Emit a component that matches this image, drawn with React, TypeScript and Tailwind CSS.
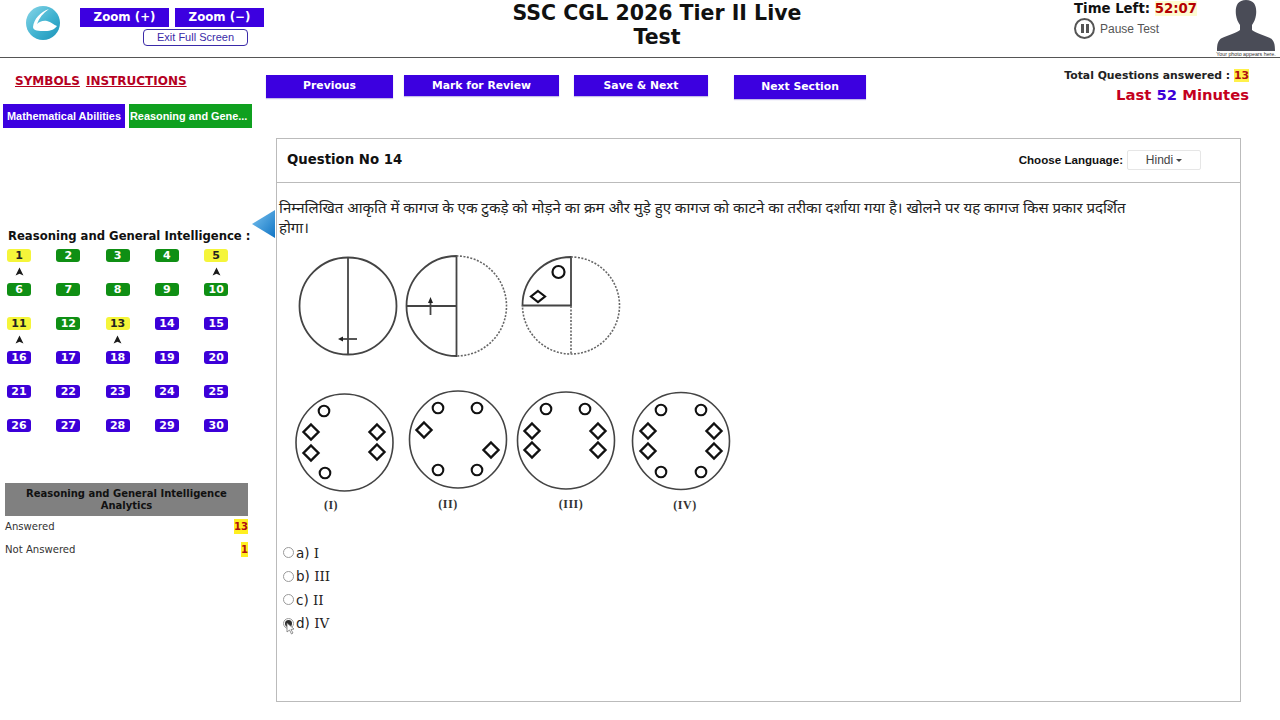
import React from "react";

const verdana = "font-['DejaVu_Sans',sans-serif]";

function Logo() {
  return (
    <svg width="36" height="36" viewBox="0 0 36 36">
      <defs>
        <linearGradient id="lg" x1="0" y1="0" x2="1" y2="1">
          <stop offset="0" stopColor="#8ad6e8" />
          <stop offset="0.55" stopColor="#3fb2d0" />
          <stop offset="1" stopColor="#1c93b8" />
        </linearGradient>
      </defs>
      <circle cx="18" cy="18" r="17" fill="url(#lg)" />
      <path d="M24 4 C15 7 9 14 8 22 C8 26 14 26 20 26 C26 26 30 24 32 21 C29 20 26 17 22 16 C18 15 14 17 12 19 C14 13 18 8 24 4 Z" fill="#ffffff" />
    </svg>
  );
}

function Person() {
  return (
    <svg width="60" height="51" viewBox="0 0 60 51">
      <path d="M30 0 C21 0 19 7 20 15 C20.5 19 22 22 24 25 L24 30 C21 33 12 35 6 38 C2 40 1 44 1 51 L59 51 C59 44 58 40 54 38 C48 35 39 33 36 30 L36 25 C38 22 39.5 19 40 15 C41 7 39 0 30 0 Z" fill="#4a4c57" />
    </svg>
  );
}

function Fold1() {
  return (
    <g fill="none" stroke="#444" strokeWidth="1.800">
      <circle cx="348" cy="306" r="48.500" />
      <path d="M348 258V354" />
      <path d="M357 339H341" />
      <path d="M338 339l5-2.500v5z" fill="#222" stroke="none" />
    </g>
  );
}

function Fold2() {
  return (
    <g fill="none" stroke="#444" strokeWidth="1.800">
      <path d="M456.500 256 A50 50 0 0 0 456.500 356 Z" />
      <path d="M456.500 256 A50 50 0 0 1 456.500 356" strokeDasharray="2 1.500" strokeWidth="1.600" stroke="#666" />
      <path d="M406 306H456" />
      <path d="M430.500 315V301" />
      <path d="M430.500 297l-2.500 6h5z" fill="#222" stroke="none" />
    </g>
  );
}

function Fold3() {
  return (
    <g fill="none" stroke="#444" strokeWidth="1.800">
      <path d="M571 257 A48.500 48.500 0 0 0 522.500 305.500 H571 Z" />
      <path d="M571 257 A48.500 48.500 0 0 1 571 354 A48.500 48.500 0 0 1 522.500 305.500" strokeDasharray="2 1.500" strokeWidth="1.600" stroke="#666" />
      <path d="M571 306V354" strokeDasharray="2 1.500" strokeWidth="1.600" stroke="#666" />
      <circle cx="558.500" cy="272" r="6" stroke="#111" strokeWidth="2.200" />
      <path d="M538 291l7 5.500-7 5.500-7-5.500z" stroke="#111" strokeWidth="2.200" />
    </g>
  );
}

function Dia({ x, y }: { x: number; y: number }) {
  return <path d={`M${x} ${y - 7.500}l7.500 7.500-7.500 7.500-7.500-7.500z`} fill="none" stroke="#111" strokeWidth="2.400" />;
}

function Opt({ cx, cy, r, circles, dias }: { cx: number; cy: number; r: number; circles: number[][]; dias: number[][] }) {
  return (
    <g>
      <circle cx={cx} cy={cy} r={r} fill="none" stroke="#444" strokeWidth="1.600" />
      {circles.map(([x, y]) => (
        <circle key={`${x}-${y}`} cx={x} cy={y} r="5.300" fill="none" stroke="#111" strokeWidth="2.100" />
      ))}
      {dias.map(([x, y]) => (
        <Dia key={`${x}-${y}`} x={x} y={y} />
      ))}
    </g>
  );
}

function Figure() {
  const s = { fontFamily: "'Liberation Serif',serif", fontWeight: 700, fontSize: 12, fill: "#333", letterSpacing: 0.5 };
  return (
    <svg width="480" height="270" viewBox="280 250 480 270" className="block">
      <Fold1 />
      <Fold2 />
      <Fold3 />
      <Opt cx={344.500} cy={442.500} r={48.500} circles={[[324, 411], [325, 473]]} dias={[[311, 432], [311, 453], [377, 432], [377, 452]]} />
      <Opt cx={458} cy={439.500} r={48.500} circles={[[438, 408], [477, 408], [438, 470], [477, 470]]} dias={[[424, 430], [491, 450]]} />
      <Opt cx={566} cy={440.500} r={48.500} circles={[[546, 409], [585, 409]]} dias={[[532, 431], [532, 450], [598, 431], [598, 450]]} />
      <Opt cx={681} cy={441} r={48.500} circles={[[661, 410], [701, 410], [661, 472], [701, 472]]} dias={[[648, 431], [648, 451], [714, 431], [714, 451]]} />
      <text x="331" y="509" textAnchor="middle" style={s}>(I)</text>
      <text x="448" y="508" textAnchor="middle" style={s}>(II)</text>
      <text x="571" y="508" textAnchor="middle" style={s}>(III)</text>
      <text x="685" y="509" textAnchor="middle" style={s}>(IV)</text>
    </svg>
  );
}

const yellow = [1, 5, 11, 13];
const green = [2, 3, 4, 6, 7, 8, 9, 10, 12];

function Num({ n }: { n: number }) {
  const tone = yellow.includes(n)
    ? "bg-[#f5f53a] text-[#222]"
    : green.includes(n)
      ? "bg-[#0f8f14] text-white"
      : "bg-[#3c00d8] text-white";
  return (
    <div className="h-[34px] flex flex-col items-start">
      <div className={`w-[24px] h-[13px] rounded-[3px] flex items-center justify-center text-[11px] font-bold leading-none ${verdana} ${tone}`}>{n}</div>
      {yellow.includes(n) && (
        <svg width="9" height="9" viewBox="0 0 8 8" className="mt-[5px] ml-[7.500px]">
          <path d="M4 0.500 L7.500 7.500 L4 6 L0.500 7.500 Z" fill="#1a1a1a" />
        </svg>
      )}
    </div>
  );
}

function ActionButton({ children, className }: { children: React.ReactNode; className: string }) {
  return (
    <button className={`bg-[#3c00e0] text-white text-[10.800px] font-bold ${verdana} shadow-[0_1px_1px_#c4bce8] ${className}`}>
      {children}
    </button>
  );
}

function Choice({ label, num, checked }: { label: string; num: string; checked?: boolean }) {
  return (
    <label className="h-[23.500px] flex items-center text-[13.500px] text-[#222] font-['DejaVu_Sans',sans-serif]">
      <span className="relative w-[11px] h-[11px] rounded-full border border-[#9a9a9a] bg-white flex items-center justify-center">
        {checked && <span className="w-[7px] h-[7px] rounded-full bg-[#2d2d2d]" />}
        {checked && (
          <svg width="10" height="13" viewBox="0 0 10 13" className="absolute left-[2px] top-[3px]">
            <path d="M1 1 L1 10 L3.500 8 L5.500 12 L7 11 L5 7.500 L8 7 Z" fill="#fff" stroke="#777" strokeWidth="0.8" />
          </svg>
        )}
      </span>
      <span className="ml-[2px]">{label} <span className="font-['DejaVu_Serif',serif]">{num}</span></span>
    </label>
  );
}

export default function App() {
  const hindi = "font-['Noto_Sans','Noto_Sans_Devanagari','DejaVu_Sans',sans-serif]";
  return (
    <div className="w-[1280px] h-[720px] overflow-hidden bg-white relative">
      <header className="h-[58px] border-b border-[#555] flex">
        <div className="w-[80px] pl-[25px] pt-[5px]">
          <Logo />
        </div>
        <div className="w-[199px] pt-[8px]">
          <div className="flex gap-[6px]">
            <button className={`w-[89px] h-[19px] bg-[#3c00e0] text-white text-[11.800px] font-bold ${verdana}`}>Zoom (+)</button>
            <button className={`w-[89px] h-[19px] bg-[#3c00e0] text-white text-[11.800px] font-bold ${verdana}`}>Zoom (−)</button>
          </div>
          <button className="block ml-[63px] mt-[2px] w-[105px] h-[17px] rounded-[4px] border border-[#3a2aa8] text-[#3a2aa8] text-[11px] leading-none font-['Liberation_Sans',sans-serif]">
            Exit Full Screen
          </button>
        </div>
        <h1 className={`w-[756px] pt-[1px] text-center text-[20.500px] leading-[24px] font-bold text-[#111] ${verdana} px-[225px]`}>
          SSC CGL 2026 Tier II Live Test
        </h1>
        <div className="w-[139px] pl-[39px]">
          <div className={`text-[13.300px] leading-[17px] font-bold whitespace-nowrap text-[#111] ${verdana}`}>
            Time Left: <span className="text-[#b50000] bg-[#fdfbd0]">52:07</span>
          </div>
          <div className="flex items-center mt-[1px] whitespace-nowrap">
            <span className="w-[21px] h-[21px] rounded-full border-2 border-[#555] flex items-center justify-center gap-[2px]">
              <i className="block w-[3px] h-[9px] bg-[#555]" />
              <i className="block w-[3px] h-[9px] bg-[#555]" />
            </span>
            <span className="ml-[5px] text-[12px] text-[#555] font-['Liberation_Sans',sans-serif]">Pause Test</span>
          </div>
        </div>
        <div className="w-[106px] pl-[38px] flex flex-col items-center">
          <Person />
          <div className="mt-[1px] text-[5.300px] leading-[5px] whitespace-nowrap text-[#333] font-['Liberation_Sans',sans-serif]">Your photo appears here.</div>
        </div>
      </header>

      <div className="flex">
        <aside className="w-[266px] shrink-0">
          <div className={`pl-[15px] pt-[14px] h-[46px] flex gap-[6px] text-[12px] font-bold text-[#b5001f] underline ${verdana}`}>
            <span>SYMBOLS</span>
            <span>INSTRUCTIONS</span>
          </div>
          <div className="pl-[3px] flex gap-[4px] font-['Liberation_Sans',sans-serif] text-[10.900px] font-bold text-white">
            <div className="w-[122px] h-[24px] bg-[#3c00e0] flex items-center justify-center">Mathematical Abilities</div>
            <div className="w-[123px] h-[24px] bg-[#0fa01f] flex items-center pl-[1px] whitespace-nowrap">Reasoning and Gene...</div>
          </div>
          <div className={`mt-[100px] ml-[8px] text-[11.650px] leading-[16px] font-bold whitespace-nowrap text-[#111] ${verdana}`}>
            Reasoning and General Intelligence :
          </div>
          <div className="mt-[5px] ml-[7px] grid grid-cols-[repeat(5,49.300px)]">
            {Array.from({ length: 30 }, (_, i) => (
              <Num key={i} n={i + 1} />
            ))}
          </div>
          <div className={`mt-[30px] ml-[5px] w-[243px] h-[33px] bg-[#808080] flex items-center justify-center text-center text-[10px] leading-[12px] font-bold text-[#111] px-[10px] ${verdana}`}>
            Reasoning and General Intelligence Analytics
          </div>
          <div className={`ml-[5px] w-[243px] -mt-[1px] text-[10.100px] text-[#333] ${verdana}`}>
            <div className="h-[23px] flex items-center justify-between">
              <span>Answered</span>
              <span className="bg-[#ffef20] text-[#b01010] font-bold">13</span>
            </div>
            <div className="h-[23px] flex items-center justify-between">
              <span>Not Answered</span>
              <span className="bg-[#ffef20] text-[#b01010] font-bold">1</span>
            </div>
          </div>
        </aside>

        <main className="flex-1 relative">
          <div className="h-[80px] flex relative">
            <ActionButton className="mt-[17px] w-[127px] h-[23px]">Previous</ActionButton>
            <ActionButton className="mt-[17px] ml-[11px] w-[155px] h-[21px] pt-[1px]">Mark for Review</ActionButton>
            <ActionButton className="mt-[17px] ml-[15px] w-[134px] h-[21px] pt-[1px]">Save &amp; Next</ActionButton>
            <ActionButton className="mt-[17px] ml-[26px] w-[132px] h-[24px]">Next Section</ActionButton>
            <div className={`ml-auto mr-[31px] pt-[10px] text-right font-bold ${verdana}`}>
              <div className="text-[10.850px] leading-[16px] text-[#222] whitespace-nowrap">
                Total Questions answered : <span className="bg-[#fff14a] text-[#b01010]">13</span>
              </div>
              <div className="text-[14.800px] leading-[22px] text-[#c4001d] whitespace-nowrap">
                Last <span className="text-[#3c00d8]">52</span> Minutes
              </div>
            </div>
          </div>

          <section className="ml-[10px] w-[965px] h-[564px] border border-[#bbb]">
            <div className="h-[44px] border-b border-[#bbb] flex items-center pl-[10px] pb-[2px]">
              <span className={`text-[13.300px] font-bold text-[#111] ${verdana}`}>Question No 14</span>
              <span className="ml-auto text-[11.600px] font-bold text-[#111] font-['Liberation_Sans',sans-serif]">Choose Language:</span>
              <span className="ml-[4px] mr-[39px] w-[74px] h-[20px] border border-[#e6e6e6] rounded-[2px] flex items-center justify-center text-[12px] text-[#444] font-['Liberation_Sans',sans-serif]">
                Hindi
                <i className="ml-[3px] mt-[1px] w-0 h-0 border-x-[3px] border-x-transparent border-t-[3px] border-t-[#444]" />
              </span>
            </div>
            <p className={`mt-[14px] ml-[2px] w-[855px] text-[15px] leading-[20px] text-[#222] ${hindi}`}>
              निम्नलिखित आकृति में कागज के एक टुकड़े को मोड़ने का क्रम और मुड़े हुए कागज को काटने का तरीका दर्शाया गया है। खोलने पर यह कागज किस प्रकार प्रदर्शित होगा।
            </p>
            <div className="mt-[13px] ml-[3px]">
              <Figure />
            </div>
            <div className="mt-[21px] ml-[6px]">
              <Choice label="a)" num="I" />
              <Choice label="b)" num="III" />
              <Choice label="c)" num="II" />
              <Choice label="d)" num="IV" checked />
            </div>
          </section>

          <svg width="24" height="28" viewBox="0 0 24 28" className="absolute left-[-14px] top-[152px]">
            <defs>
              <linearGradient id="tri" x1="0" y1="0" x2="1" y2="1">
                <stop offset="0" stopColor="#7cc4f0" />
                <stop offset="1" stopColor="#1074c4" />
              </linearGradient>
            </defs>
            <path d="M0 14 L23 0 L23 28 Z" fill="url(#tri)" />
          </svg>
        </main>
      </div>
    </div>
  );
}
